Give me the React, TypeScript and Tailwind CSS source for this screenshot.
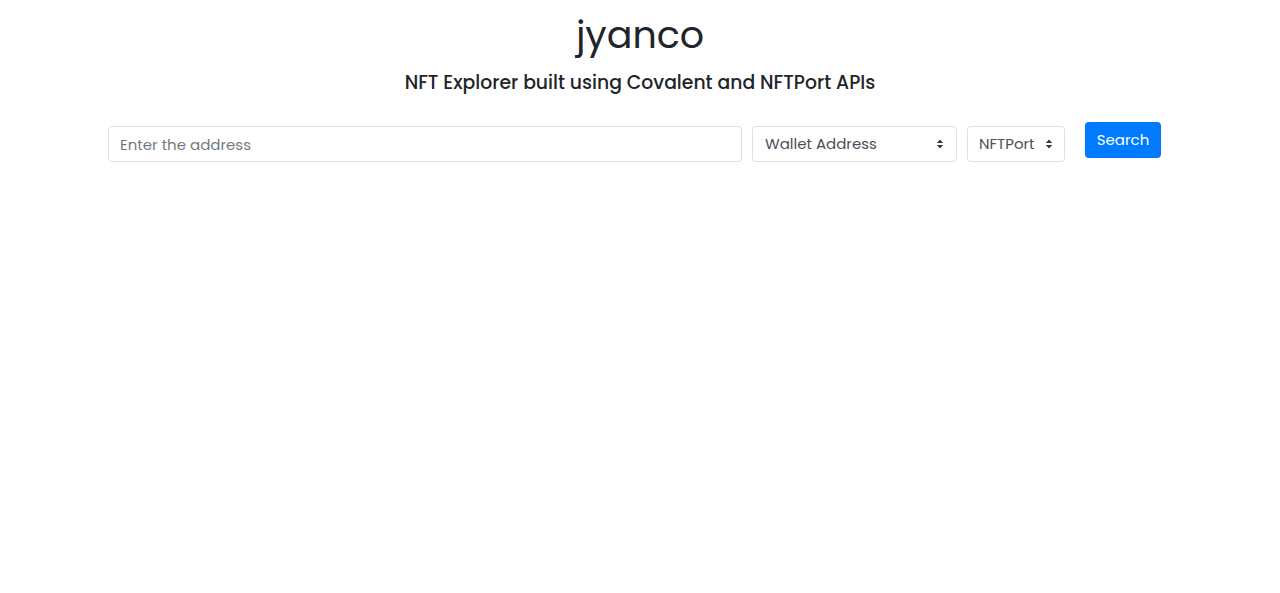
import React from "react";

function Chevrons() {
  return (
    <svg width="8" height="10" viewBox="0 0 8 10" className="shrink-0" fill="#343a40">
      <path d="M4 0.5L7.2 4H0.8z" />
      <path d="M4 9.5L0.8 6h6.4z" />
    </svg>
  );
}

export default function App() {
  return (
    <div
      className="min-h-[593px] w-full bg-white text-[#212529]"
      style={{ fontFamily: "Poppins, Inter, 'Noto Sans', sans-serif" }}
    >
      <div className="flex flex-col items-center pt-[12px]">
        <h1 className="text-[38px] font-normal leading-[1.2]">jyanco</h1>
        <h5 className="mt-[14px] text-[18.8px] font-medium leading-[1.2]">
          NFT Explorer built using Covalent and NFTPort APIs
        </h5>
      </div>

      <div className="mt-[28px] flex items-start pl-[108px]">
        <input
          type="text"
          placeholder="Enter the address"
          className="mt-[4px] h-[36px] w-[634px] rounded-[4px] border border-[#dcdfe3] px-[11px] text-[15px] text-[#495057] outline-none placeholder:text-[#737a81]"
        />
        <div className="ml-[10px] mt-[4px] flex h-[36px] w-[205px] items-center justify-between rounded-[4px] border border-[#dcdfe3] pl-[12px] pr-[12px] text-[15px] text-[#495057]">
          <span>Wallet Address</span>
          <Chevrons />
        </div>
        <div className="ml-[10px] mt-[4px] flex h-[36px] w-[98px] items-center justify-between rounded-[4px] border border-[#dcdfe3] pl-[11px] pr-[11px] text-[15px] text-[#495057]">
          <span>NFTPort</span>
          <Chevrons />
        </div>
        <button className="ml-[20px] h-[36px] w-[76px] rounded-[4px] bg-[#007bff] text-[15px] text-white">
          Search
        </button>
      </div>
    </div>
  );
}
